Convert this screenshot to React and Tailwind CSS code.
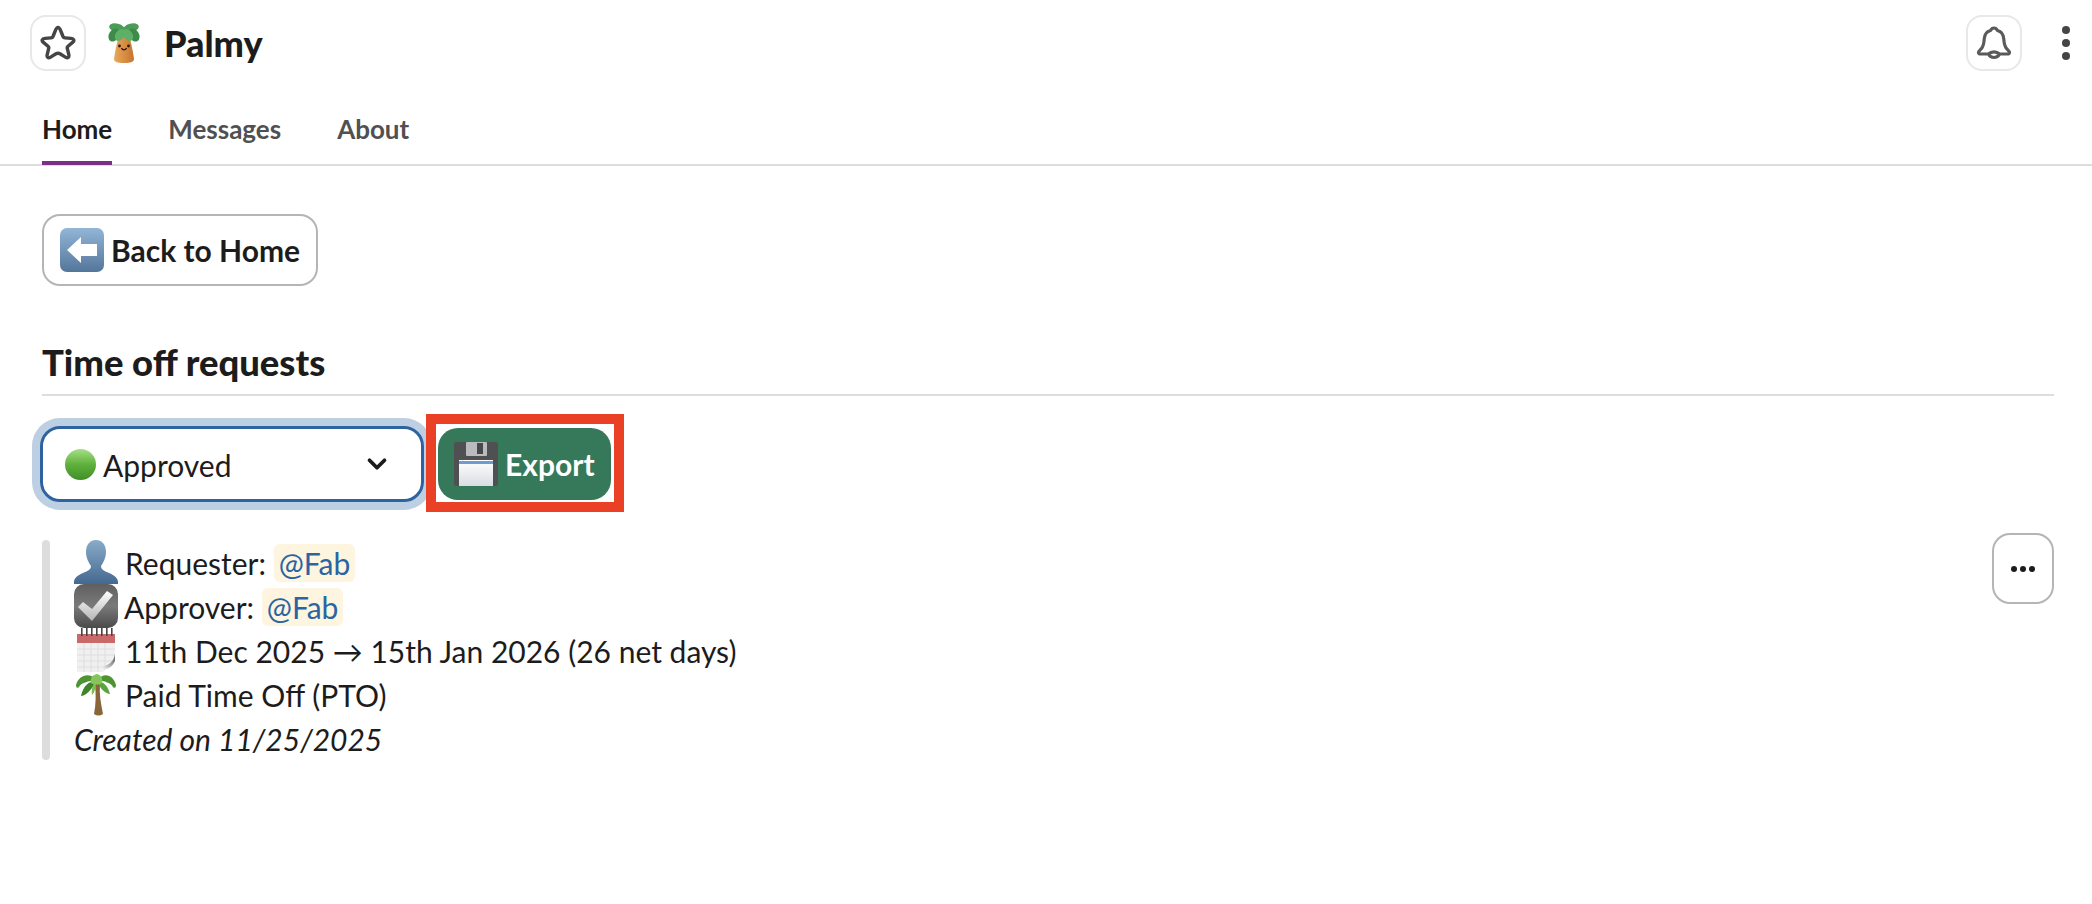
import { ChevronDown } from "lucide-react";

function StarIcon() {
  return (
    <svg width="36" height="36" viewBox="0 0 36 36" fill="none">
      <path d="M18 2.5 C19.5 2.5 20 4 21 6.5 L23 11.5 C23.4 12.4 24 12.8 25 12.9 L31 13.4 C34 13.7 34.8 15.6 32.6 17.4 L28 21.2 C27.3 21.8 27 22.5 27.3 23.4 L28.8 29.6 C29.4 32.4 27.8 33.6 25.4 32.1 L20 28.8 C18.7 28 17.3 28 16 28.8 L10.6 32.1 C8.2 33.6 6.6 32.4 7.2 29.6 L8.7 23.4 C9 22.5 8.7 21.8 8 21.2 L3.4 17.4 C1.2 15.6 2 13.7 5 13.4 L11 12.9 C12 12.8 12.6 12.4 13 11.5 L15 6.5 C16 4 16.5 2.5 18 2.5 Z" stroke="#454447" strokeWidth="3.4" strokeLinejoin="round" />
    </svg>
  );
}

function BellIcon() {
  return (
    <svg width="36" height="36" viewBox="0 0 36 36" fill="none">
      <path d="M18 3 C20 3 21 4.5 21.5 5.5 C25.5 6.5 27.5 10 27.8 14 C28 18 28.5 21 30.5 23.5 C31.5 24.7 33.5 26 33.5 27.5 C33.5 28.6 32.5 29 31 29 L23.5 29 C22.5 31 20.5 32.5 18 32.5 C15.5 32.5 13.5 31 12.5 29 L5 29 C3.5 29 2.5 28.6 2.5 27.5 C2.5 26 4.5 24.7 5.5 23.5 C7.5 21 8 18 8.2 14 C8.5 10 10.5 6.5 14.5 5.5 C15 4.5 16 3 18 3 Z M12.5 29 C14 27.5 16 26.8 18 26.8 C20 26.8 22 27.5 23.5 29" stroke="#5a595c" strokeWidth="3.2" strokeLinejoin="round" />
    </svg>
  );
}

function PalmyLogo() {
  return (
    <svg width="32" height="40" viewBox="0 0 32 40">
      <defs>
        <linearGradient id="trunk" x1="0" y1="0" x2="1" y2="0">
          <stop offset="0" stopColor="#eaa85a" />
          <stop offset="1" stopColor="#c67430" />
        </linearGradient>
      </defs>
      <path d="M11 12 L21 12 C23 20 25 28 26 36 C26 39 22 40 16 40 C10 40 6 39 6 36 C7 28 9 20 11 12 Z" fill="url(#trunk)" />
      <ellipse cx="9" cy="5" rx="8" ry="4.5" fill="#4c9c58" transform="rotate(15 9 5)" />
      <ellipse cx="23" cy="5" rx="8" ry="4.5" fill="#4c9c58" transform="rotate(-15 23 5)" />
      <ellipse cx="6" cy="12" rx="5" ry="7" fill="#3d8a4b" transform="rotate(30 6 12)" />
      <ellipse cx="26" cy="12" rx="5" ry="7" fill="#3d8a4b" transform="rotate(-30 26 12)" />
      <ellipse cx="12" cy="12" rx="4.5" ry="6.5" fill="#5fb067" transform="rotate(35 12 12)" />
      <ellipse cx="20" cy="12" rx="4.5" ry="6.5" fill="#5fb067" transform="rotate(-35 20 12)" />
      <circle cx="11.5" cy="23" r="1.4" fill="#2b1a10" />
      <circle cx="20.5" cy="23" r="1.4" fill="#2b1a10" />
      <path d="M13.5 25 C14.5 27.5 17.5 27.5 18.5 25" stroke="#2b1a10" strokeWidth="1.3" fill="none" />
    </svg>
  );
}

function BackEmoji() {
  return (
    <svg width="44" height="44" viewBox="0 0 44 44">
      <defs>
        <linearGradient id="backBg" x1="0" y1="0" x2="0" y2="1">
          <stop offset="0" stopColor="#93b5d6" />
          <stop offset="1" stopColor="#53769b" />
        </linearGradient>
      </defs>
      <rect x="0" y="0" width="44" height="44" rx="7" fill="url(#backBg)" />
      <path d="M7 22 L21 9 L21 16 L37 16 L37 28 L21 28 L21 35 Z" fill="#ffffff" />
    </svg>
  );
}

function GreenCircle() {
  return (
    <svg width="31" height="31" viewBox="0 0 30 30">
      <defs>
        <linearGradient id="greenBall" x1="0" y1="0" x2="0" y2="1">
          <stop offset="0" stopColor="#a6e084" />
          <stop offset="0.5" stopColor="#5fb03c" />
          <stop offset="1" stopColor="#3f8f28" />
        </linearGradient>
      </defs>
      <circle cx="15" cy="15" r="15" fill="url(#greenBall)" />
    </svg>
  );
}

function FloppyEmoji() {
  return (
    <svg width="44" height="44" viewBox="0 0 44 44">
      <defs>
        <linearGradient id="floppyLabel" x1="0" y1="0" x2="0" y2="1">
          <stop offset="0" stopColor="#ffffff" />
          <stop offset="1" stopColor="#d9dde2" />
        </linearGradient>
      </defs>
      <path d="M2 0 L42 0 Q44 0 44 2 L44 42 Q44 44 42 44 L2 44 Q0 44 0 42 L0 2 Q0 0 2 0 Z" fill="#4f5052" />
      <rect x="12" y="0" width="21" height="14" rx="1" fill="#b9bbbe" />
      <rect x="23" y="1" width="6" height="11" fill="#47484a" />
      <rect x="5" y="18" width="34" height="26" fill="url(#floppyLabel)" />
      <rect x="5" y="19" width="34" height="3" fill="#6f9bd1" />
    </svg>
  );
}

function PersonEmoji() {
  return (
    <svg width="44" height="44" viewBox="0 0 44 44">
      <defs>
        <linearGradient id="personFill" x1="0" y1="0" x2="0" y2="1">
          <stop offset="0" stopColor="#8aabc9" />
          <stop offset="1" stopColor="#44688f" />
        </linearGradient>
      </defs>
      <path d="M22 0 C29 0 32 6 32 12 C32 18 29 23 27 26 C27 30 31 31 35 33 C40 35 44 38 44 42 L44 44 L0 44 L0 42 C0 38 4 35 9 33 C13 31 17 30 17 26 C15 23 12 18 12 12 C12 6 15 0 22 0 Z" fill="url(#personFill)" />
    </svg>
  );
}

function CheckEmoji() {
  return (
    <svg width="44" height="44" viewBox="0 0 44 44">
      <defs>
        <linearGradient id="checkBg" x1="0" y1="0" x2="0" y2="1">
          <stop offset="0" stopColor="#5f5f5f" />
          <stop offset="0.5" stopColor="#7a7a7a" />
          <stop offset="1" stopColor="#4a4a4a" />
        </linearGradient>
        <linearGradient id="checkMark" x1="0" y1="0" x2="0" y2="1">
          <stop offset="0" stopColor="#ffffff" />
          <stop offset="1" stopColor="#b5b5b5" />
        </linearGradient>
      </defs>
      <rect x="0" y="0" width="44" height="44" rx="10" fill="url(#checkBg)" />
      <path d="M4 23 L9 18 L18 25 L33 7 L39 11 L18 37 Z" fill="url(#checkMark)" />
    </svg>
  );
}

function CalendarEmoji() {
  const rings = [5, 10, 15, 20, 25, 30, 35];
  return (
    <svg width="40" height="44" viewBox="0 0 40 44">
      <defs>
        <linearGradient id="pageCurl" x1="0" y1="1" x2="1" y2="0">
          <stop offset="0" stopColor="#ffffff" />
          <stop offset="1" stopColor="#4f4f4f" />
        </linearGradient>
      </defs>
      <rect x="1" y="6" width="38" height="38" fill="#f0f0f0" />
      <rect x="1" y="6" width="38" height="9" fill="#c96a6a" />
      {rings.map((x) => (
        <rect key={x} x={x} y="0" width="1.6" height="8" fill="#444" />
      ))}
      <path d="M1 21 H39 M1 27 H39 M1 33 H39 M1 39 H39 M8 15 V44 M15 15 V44 M22 15 V44 M29 15 V44" stroke="#dedede" strokeWidth="1" />
      <path d="M39 32 L39 44 L27 44 Z" fill="#ffffff" />
      <path d="M39 26 C38 34 32 38 24 39 C30 43 36 40 39 33 Z" fill="url(#pageCurl)" />
    </svg>
  );
}

function PalmEmoji() {
  return (
    <svg width="40" height="44" viewBox="0 0 40 44">
      <path d="M19 12 L24 12 C23 22 25 32 27 42 C24 44 21 44 18 42 C20 32 20 22 19 12 Z" fill="#8a6538" />
      <path d="M21 8 C14 0 3 2 0 13 C0 15 1 17 3 15 C5 11 12 9 21 8 Z" fill="#4d9433" />
      <path d="M21 8 C28 0 37 2 40 13 C40 15 39 17 37 15 C35 11 29 9 21 8 Z" fill="#4d9433" />
      <path d="M20 9 C13 9 7 14 5 24 C9 24 16 18 20 9 Z" fill="#3f8429" />
      <path d="M21 9 C27 9 32 14 34 22 C30 22 24 17 21 9 Z" fill="#5aa53b" />
      <path d="M20 9 C17 12 15 17 16 23 C19 20 20 15 20 9 Z" fill="#79bd4f" />
      <path d="M21 2 C16 3 14 6 15 11 C18 13 23 13 26 11 C27 6 25 3 21 2 Z" fill="#86c45c" />
    </svg>
  );
}

function Mention({ children }) {
  return (
    <span className="inline-block h-[38px] leading-[38px] px-[5px] rounded-md bg-[#fdf5e0] text-[#2a64a3]">
      {children}
    </span>
  );
}

function Line({ icon, children, gap = "gap-[7px]" }) {
  return (
    <div className={`flex items-center h-[44px] ${gap}`}>
      <div className="w-[44px] h-[44px] flex items-center justify-center shrink-0">{icon}</div>
      <div className="pt-[2px]">{children}</div>
    </div>
  );
}

export default function App() {
  return (
    <div className="w-[2092px] h-[904px] bg-white text-[#1d1c1d] font-['Lato',sans-serif] overflow-hidden">
      {/* Cabecera */}
      <header className="flex items-center h-[88px] pl-[30px] pr-[22px] pb-[2px]">
        <button className="w-[56px] h-[56px] flex items-center justify-center rounded-2xl border-2 border-[#e8e8e8]">
          <StarIcon />
        </button>
        <div className="ml-[22px] mr-[24px]">
          <PalmyLogo />
        </div>
        <h1 className="text-[36px] font-black leading-none">Palmy</h1>
        <div className="ml-auto flex items-center gap-[40px]">
          <button className="w-[56px] h-[56px] flex items-center justify-center rounded-2xl border-2 border-[#e8e8e8]">
            <BellIcon />
          </button>
          <div className="flex flex-col gap-[5px]">
            <span className="w-[8px] h-[8px] rounded-full bg-[#454447]" />
            <span className="w-[8px] h-[8px] rounded-full bg-[#454447]" />
            <span className="w-[8px] h-[8px] rounded-full bg-[#454447]" />
          </div>
        </div>
      </header>

      {/* Tabs */}
      <nav className="flex gap-[56px] h-[78px] pl-[42px] border-b-2 border-[#dddddd] text-[26px] font-bold">
        <div className="h-[77px] pt-[25px] leading-[32px] border-b-4 border-[#7c3085]">Home</div>
        <div className="pt-[25px] leading-[32px] text-[#505052]">Messages</div>
        <div className="pt-[25px] leading-[32px] text-[#505052]">About</div>
      </nav>

      <main className="pl-[42px] pr-[38px]">
        <button className="mt-[48px] w-[276px] h-[72px] flex items-center gap-[7px] pl-[16px] rounded-[18px] border-2 border-[#b5b5b5] text-[30px] font-bold">
          <BackEmoji />
          <span>Back to Home</span>
        </button>

        <h2 className="mt-[56px] h-[50px] text-[36.4px] leading-[40px] font-black">Time off requests</h2>
        <div className="mt-[2px] h-[2px] bg-[#dddddd]" />

        {/* Filtro y exportar */}
        <div className="mt-[30px] flex items-center gap-[14px] h-[76px]">
          <div className="w-[384px] h-[76px] flex items-center pl-[22px] pr-[29px] rounded-[20px] border-[3px] border-[#2e62a0] ring-[8px] ring-[#bdcfe3] text-[30px] -ml-[2px]">
            <GreenCircle />
            <span className="ml-[7px] pt-[2px]">Approved</span>
            <ChevronDown className="ml-auto" size={30} strokeWidth={3} />
          </div>
          <div className="relative">
            <button className="w-[173px] h-[72px] flex items-center gap-[7px] pl-[16px] rounded-[20px] bg-[#36785a] text-white text-[30px] font-bold">
              <FloppyEmoji />
              <span>Export</span>
            </button>
            {/* Marco rojo de la anotación */}
            <div className="absolute -left-[12px] -right-[13px] -top-[14px] -bottom-[12px] border-[10px] border-[#ea4025] pointer-events-none" />
          </div>
        </div>

        {/* Solicitud */}
        <div className="mt-[31px] flex items-start">
          <div className="w-[8px] h-[220px] mt-[7px] rounded bg-[#dddddd]" />
          <div className="ml-[24px] mt-[7px] text-[30px] leading-[44px]">
            <Line icon={<PersonEmoji />}>
              Requester: <Mention>@Fab</Mention>
            </Line>
            <Line icon={<CheckEmoji />} gap="gap-[6px]">
              Approver: <Mention>@Fab</Mention>
            </Line>
            <Line icon={<CalendarEmoji />}>11th Dec 2025 → 15th Jan 2026 (26 net days)</Line>
            <Line icon={<PalmEmoji />}>Paid Time Off (PTO)</Line>
            <div className="italic pt-[1px]">Created on 11/25/2025</div>
          </div>
          <button className="ml-auto w-[62px] h-[71px] flex items-center justify-center gap-[3px] rounded-[18px] border-2 border-[#b5b5b5]">
            <span className="w-[6px] h-[6px] rounded-full bg-[#1d1c1d]" />
            <span className="w-[6px] h-[6px] rounded-full bg-[#1d1c1d]" />
            <span className="w-[6px] h-[6px] rounded-full bg-[#1d1c1d]" />
          </button>
        </div>
      </main>
    </div>
  );
}
